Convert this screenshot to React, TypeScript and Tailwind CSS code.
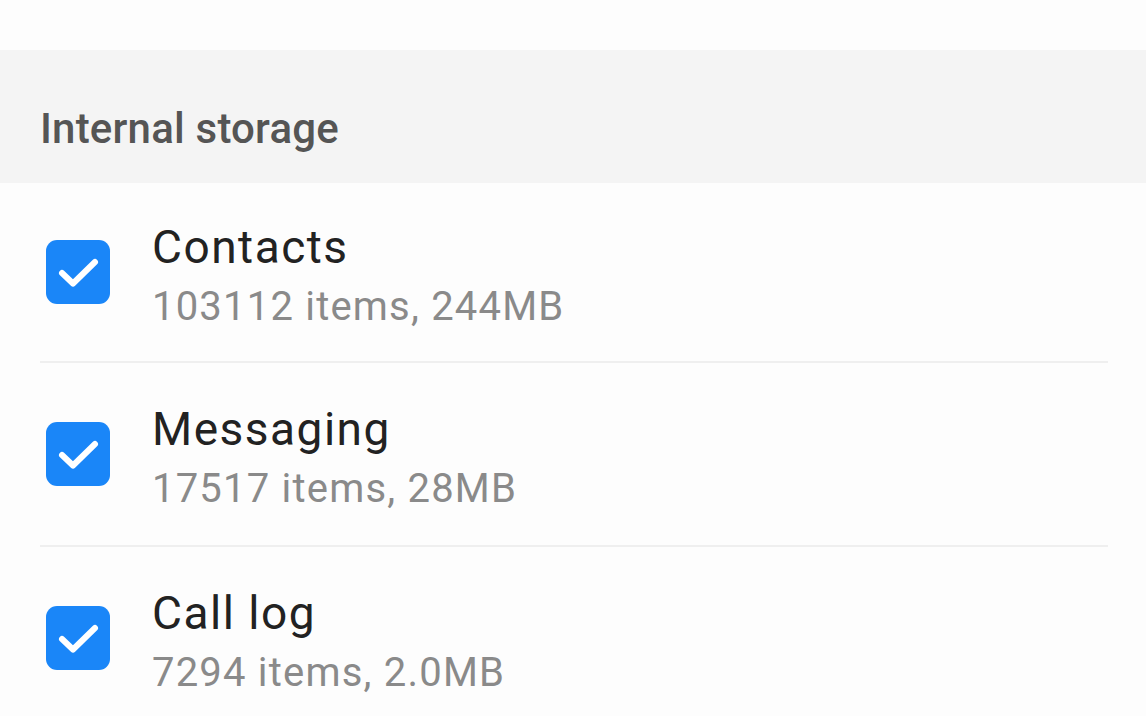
import React from "react";

const rows = [
  { title: "Contacts", sub: "103112 items, 244MB", h: "h-[178px]" },
  { title: "Messaging", sub: "17517 items, 28MB", h: "h-[182px]" },
  { title: "Call log", sub: "7294 items, 2.0MB", h: "h-[182px]" },
];

function Check() {
  return (
    <div className="w-[64px] h-[64px] rounded-[11px] bg-[#1a86f8] flex items-center justify-center shrink-0">
      <svg width="64" height="64" viewBox="0 0 64 64">
        <path d="M16 33 L27 43.5 L49 22" fill="none" stroke="#ffffff" strokeWidth="6" strokeLinecap="round" strokeLinejoin="round" />
      </svg>
    </div>
  );
}

export default function App() {
  return (
    <div className="w-[1146px] h-[716px] overflow-hidden bg-[#fdfdfd]" style={{ fontFamily: "Roboto, 'Noto Sans', sans-serif" }}>
      <div className="h-[50px] bg-[#fdfdfd]" />
      <div className="h-[133px] bg-[#f4f4f4] pl-[40px] pt-[58px]">
        <div className="text-[42px] leading-[42px] font-medium tracking-[0.2px] text-[#555555]">Internal storage</div>
      </div>
      {rows.map((r, i) => (
        <div key={r.title}>
          <div className={`${r.h} flex items-center pl-[46px]`}>
            <Check />
            <div className="ml-[42px] flex flex-col gap-[17px] pt-[6px]">
              <div className="text-[46px] leading-[46px] tracking-[1.5px] text-[#222222]">{r.title}</div>
              <div className="text-[40px] leading-[40px] tracking-[1.2px] text-[#8a8a8a]">{r.sub}</div>
            </div>
          </div>
          {i < rows.length - 1 && <div className="h-[2px] bg-[#efefef] ml-[40px] mr-[38px]" />}
        </div>
      ))}
    </div>
  );
}
